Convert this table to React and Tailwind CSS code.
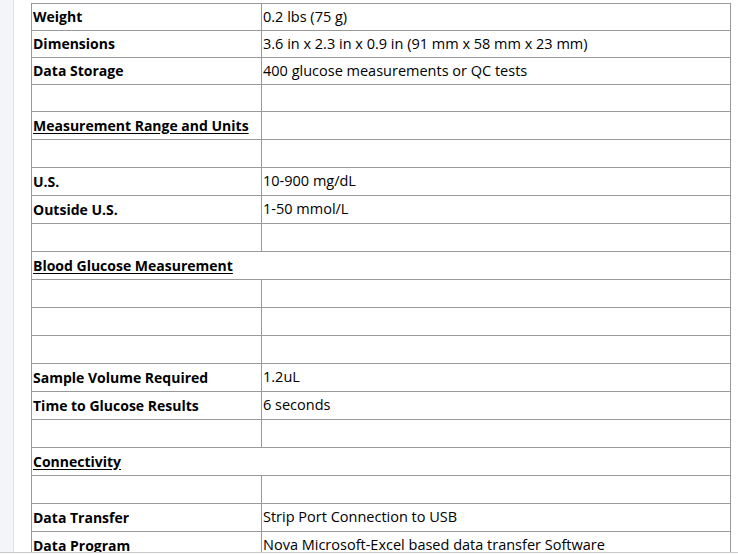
import React from "react";

const rows = [
  { h: 27, l: "Weight", r: "0.2 lbs (75 g)" },
  { h: 27, l: "Dimensions", r: "3.6 in x 2.3 in x 0.9 in (91 mm x 58 mm x 23 mm)" },
  { h: 27, l: "Data Storage", r: "400 glucose measurements or QC tests" },
  { h: 27, l: "", r: "" },
  { h: 28, l: "Measurement Range and Units", r: "", u: true },
  { h: 28, l: "", r: "" },
  { h: 28, l: "U.S.", r: "10-900 mg/dL" },
  { h: 28, l: "Outside U.S.", r: "1-50 mmol/L" },
  { h: 28, l: "", r: "" },
  { h: 28, l: "Blood Glucose Measurement", u: true, span: true },
  { h: 28, l: "", r: "" },
  { h: 28, l: "", r: "" },
  { h: 28, l: "", r: "" },
  { h: 28, l: "Sample Volume Required", r: "1.2uL" },
  { h: 28, l: "Time to Glucose Results", r: "6 seconds" },
  { h: 28, l: "", r: "" },
  { h: 28, l: "Connectivity", u: true, span: true },
  { h: 28, l: "", r: "" },
  { h: 28, l: "Data Transfer", r: "Strip Port Connection to USB" },
  { h: 28, l: "Data Program", r: "Nova Microsoft-Excel based data transfer Software" },
];

export default function App() {
  return (
    <div
      className="h-[555px] w-[738px] overflow-hidden bg-white text-black"
      style={{ fontFamily: '"Open Sans", "Noto Sans", sans-serif' }}
    >
      <div className="flex h-[553px] border-b border-[#c8c8c8] overflow-hidden">
        <div className="w-[14px] shrink-0 bg-[#f3f5f8] border-r border-[#dde1e6]" />
        <div className="w-[17px] shrink-0" />
        <div className="pt-[3px]">
          <div className="w-[700px] border-t border-l border-r border-[#999999] leading-none">
            {rows.map((row, i) => (
              <div
                key={i}
                className="flex border-b border-[#999999]"
                style={{ height: row.h }}
              >
                {row.span ? (
                  <div className="flex flex-1 items-center pl-[1px] text-[14px] font-bold">
                    <span className="underline underline-offset-2">{row.l}</span>
                  </div>
                ) : (
                  <>
                    <div className="flex w-[230px] shrink-0 items-center border-r border-[#999999] pl-[1px] text-[14px] font-bold">
                      <span className={row.u ? "underline underline-offset-2" : ""}>{row.l}</span>
                    </div>
                    <div className="flex flex-1 items-center pl-[1px] text-[14.5px]">{row.r}</div>
                  </>
                )}
              </div>
            ))}
          </div>
        </div>
      </div>
    </div>
  );
}
